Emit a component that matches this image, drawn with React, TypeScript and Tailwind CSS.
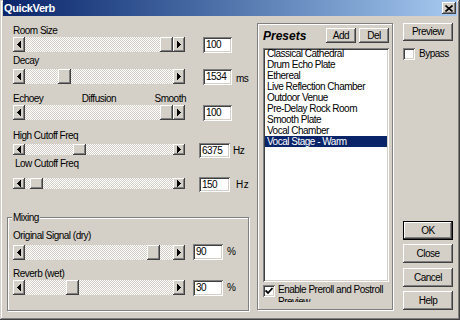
import React from 'react';

const raised =
  'shadow-[inset_-1px_-1px_#404040,inset_1px_1px_#ffffff,inset_-2px_-2px_#808080,inset_2px_2px_#d4d0c8]';
const sunken =
  'shadow-[inset_1px_1px_#808080,inset_-1px_-1px_#ffffff,inset_2px_2px_#404040,inset_-2px_-2px_#d4d0c8]';
const etched = 'border border-[#808080] shadow-[inset_1px_1px_#ffffff,1px_1px_#ffffff]';
const checker =
  'bg-[image:repeating-conic-gradient(#ffffff_0_25%,#d4d0c8_0_50%)] bg-[length:2px_2px]';

const presets = [
  'Classical Cathedral',
  'Drum Echo Plate',
  'Ethereal',
  'Live Reflection Chamber',
  'Outdoor Venue',
  'Pre-Delay Rock Room',
  'Smooth Plate',
  'Vocal Chamber',
  'Vocal Stage - Warm',
];

function Arrow({ dir }: { dir: 'left' | 'right' }) {
  return (
    <svg width="4" height="7" viewBox="0 0 4 7" className="block" shapeRendering="crispEdges">
      <polygon points={dir === 'left' ? '4,0 4,7 0,3.5' : '0,0 0,7 4,3.5'} fill="#000" />
    </svg>
  );
}

// track is 148px wide, thumb 13px
function Slider({ frac, h }: { frac: number; h: string }) {
  return (
    <div className={`flex w-[172px] ${h}`}>
      <div className={`w-[12px] bg-[#d4d0c8] flex items-center justify-center ${raised}`}>
        <Arrow dir="left" />
      </div>
      <div className={`flex-1 ${checker}`}>
        <div
          className={`w-[13px] h-full bg-[#d4d0c8] ${raised}`}
          style={{ marginLeft: Math.round(frac * 135) }}
        />
      </div>
      <div className={`w-[12px] bg-[#d4d0c8] flex items-center justify-center ${raised}`}>
        <Arrow dir="right" />
      </div>
    </div>
  );
}

function Edit({ value, w, h }: { value: string; w: string; h: string }) {
  return <div className={`${w} ${h} bg-white pl-[3px] leading-[16px] ${sunken}`}>{value}</div>;
}

function Check({ checked }: { checked?: boolean }) {
  return (
    <div className={`w-[12px] h-[12px] bg-white flex items-center justify-center shrink-0 ${sunken}`}>
      {checked && (
        <svg width="8" height="8" viewBox="0 0 8 8">
          <path d="M0.5 3.5L3 6L7.5 1" stroke="#000" strokeWidth="1.8" fill="none" />
        </svg>
      )}
    </div>
  );
}

function Button({ label, className = '' }: { label: string; className?: string }) {
  return (
    <div
      className={`bg-[#d4d0c8] flex items-center justify-center leading-none ${raised} ${className}`}
    >
      {label}
    </div>
  );
}

export default function App() {
  return (
    <div className="w-[460px] h-[320px] flex flex-col bg-[#d4d0c8] text-black text-[10px] tracking-[-0.5px] font-['Liberation_Sans',Arial,sans-serif] shadow-[inset_-1px_-1px_#404040,inset_1px_1px_#d4d0c8,inset_-2px_-2px_#808080,inset_2px_2px_#ffffff] overflow-hidden">
      {/* Title bar */}
      <div className="mx-[3px] h-[16px] shrink-0 flex items-center pl-[1px] bg-linear-to-r from-[#0a246a] to-[#a6caf0]">
        <span className="text-white font-bold text-[11px] tracking-[-0.4px]">QuickVerb</span>
        <div className={`ml-auto mr-[1px] w-[14px] h-[12px] bg-[#d4d0c8] flex items-center justify-center ${raised}`}>
          <svg width="8" height="7" viewBox="0 0 8 7">
            <path d="M0.5 0.5L7.5 6.5M7.5 0.5L0.5 6.5" stroke="#000" strokeWidth="1.6" />
          </svg>
        </div>
      </div>

      <div className="flex flex-1">
        {/* Left: reverb parameters */}
        <div className="w-[257px] pl-[7px] flex flex-col">
          <div className="pl-[6px] flex flex-col">
            <div className="mt-[8px] leading-[13px]">Room Size</div>
            <div className="flex items-start">
              <Slider frac={1} h="h-[15px]" />
              <div className="ml-[18px]">
                <Edit value="100" w="w-[29px]" h="h-[16px]" />
              </div>
            </div>

            <div className="mt-[1px] leading-[13px]">Decay</div>
            <div className="mt-[2px] flex items-start">
              <Slider frac={0.245} h="h-[15px]" />
              <div className="ml-[18px]">
                <Edit value="1534" w="w-[29px]" h="h-[16px]" />
              </div>
              <span className="ml-[4px] pt-[3px] leading-[13px]">ms</span>
            </div>

            <div className="mt-[7px] w-[173px] flex justify-between leading-[13px]">
              <span>Echoey</span>
              <span>Diffusion</span>
              <span>Smooth</span>
            </div>
            <div className="flex items-start">
              <Slider frac={1} h="h-[15px]" />
              <div className="ml-[18px]">
                <Edit value="100" w="w-[29px]" h="h-[16px]" />
              </div>
            </div>

            <div className="mt-[8px] leading-[13px]">High Cutoff Freq</div>
            <div className="mt-[1px] flex items-start">
              <div className="mt-[1px]">
                <Slider frac={0.355} h="h-[11px]" />
              </div>
              <div className="ml-[14px]">
                <Edit value="6375" w="w-[31px]" h="h-[15px]" />
              </div>
              <span className="ml-[3px] leading-[15px]">Hz</span>
            </div>

            <div className="-mt-[1px] pl-[2px] leading-[13px]">Low Cutoff Freq</div>
            <div className="mt-[7px] flex items-start">
              <div className="mt-[1px]">
                <Slider frac={0.04} h="h-[11px]" />
              </div>
              <div className="ml-[14px]">
                <Edit value="150" w="w-[31px]" h="h-[15px]" />
              </div>
              <span className="ml-[6px] leading-[15px] tracking-[0.5px]">Hz</span>
            </div>
          </div>

          {/* Mixing group */}
          <div className={`relative mt-[25px] w-[242px] h-[94px] pl-[5px] flex flex-col ${etched}`}>
            <span className="absolute left-[4px] -top-[6px] px-[1px] leading-[12px] bg-[#d4d0c8]">
              Mixing
            </span>
            <div className="mt-[11px] leading-[13px]">Original Signal (dry)</div>
            <div className="mt-[2px] flex items-start">
              <div className="mt-[1px]">
                <Slider frac={0.9} h="h-[15px]" />
              </div>
              <div className="ml-[8px]">
                <Edit value="90" w="w-[30px]" h="h-[16px]" />
              </div>
              <span className="ml-[4px] leading-[16px]">%</span>
            </div>
            <div className="mt-[7px] leading-[13px]">Reverb (wet)</div>
            <div className="flex items-start">
              <Slider frac={0.3} h="h-[15px]" />
              <div className="ml-[8px]">
                <Edit value="30" w="w-[30px]" h="h-[16px]" />
              </div>
              <span className="ml-[4px] leading-[16px]">%</span>
            </div>
          </div>
        </div>

        {/* Presets group */}
        <div className={`mt-[7px] w-[136px] h-[287px] flex flex-col ${etched}`}>
          <div className="mt-[4px] pl-[5px] pr-[3px] flex items-start">
            <span className="mt-[1px] text-[12px] leading-[14px] font-bold italic tracking-[0px]">
              Presets
            </span>
            <div className="ml-auto flex gap-[3px]">
              <Button label="Add" className="w-[30px] h-[15px]" />
              <Button label="Del" className="w-[30px] h-[15px]" />
            </div>
          </div>
          <div className={`mt-[5px] ml-[5px] w-[126px] h-[234px] bg-white px-[2px] ${sunken}`}>
            {presets.map((p, i) => (
              <div
                key={p}
                className={`h-[11px] leading-[11px] pl-[2px] whitespace-nowrap ${
                  i === presets.length - 1 ? 'bg-[#0a246a] text-white' : ''
                }`}
              >
                {p}
              </div>
            ))}
          </div>
          <div className="mt-[2px] ml-[5px] h-[18px] overflow-hidden flex items-start">
            <div className="mt-[1px]">
              <Check checked />
            </div>
            <div className="ml-[3px] w-[112px] leading-[12px]">Enable Preroll and Postroll Preview</div>
          </div>
        </div>

        {/* Right buttons */}
        <div className="ml-[10px] w-[50px] pt-[7px] pb-[10px] flex flex-col">
          <Button label="Preview" className="h-[18px]" />
          <div className="mt-[7px] flex items-start">
            <Check />
            <span className="ml-[4px] leading-[12px]">Bypass</span>
          </div>
          <div className="mt-auto h-[19px] border border-black">
            <Button label="OK" className="h-full" />
          </div>
          <Button label="Close" className="mt-[4px] h-[19px]" />
          <Button label="Cancel" className="mt-[5px] h-[19px]" />
          <Button label="Help" className="mt-[4px] h-[19px]" />
        </div>
      </div>
    </div>
  );
}
